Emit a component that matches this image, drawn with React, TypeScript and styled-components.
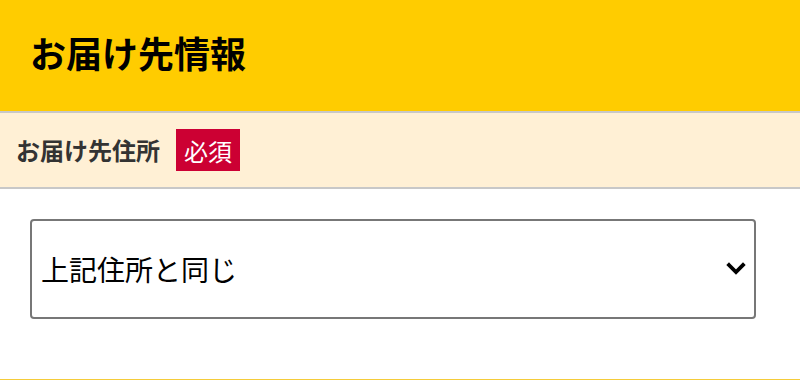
import React from "react";
import styled, { createGlobalStyle } from "styled-components";

const GlobalStyle = createGlobalStyle`
  html, body {
    margin: 0;
    padding: 0;
    background: #fff;
  }
  body {
    font-family: "Noto Sans CJK JP", "Noto Sans", sans-serif;
  }
`;

const Page = styled.div`
  width: 800px;
  height: 380px;
  overflow: hidden;
  background: #fff;
`;

const Header = styled.header`
  display: flex;
  align-items: center;
  height: 113px;
  padding-left: 30px;
  box-sizing: border-box;
  background: #ffcc00;
  border-bottom: 2px solid #c8c8c8;
`;

const Title = styled.h1`
  margin: 0;
  margin-top: -8px;
  font-size: 36px;
  font-weight: 700;
  color: #000;
  line-height: 1;
`;

const LabelRow = styled.div`
  display: flex;
  align-items: center;
  gap: 16px;
  height: 76px;
  padding-left: 16px;
  box-sizing: border-box;
  background: #fff0d5;
  border-bottom: 2px solid #c8c8c8;
`;

const Label = styled.span`
  font-size: 24px;
  font-weight: 700;
  color: #333;
  line-height: 1;
`;

const Badge = styled.span`
  display: inline-flex;
  align-items: center;
  justify-content: center;
  width: 64px;
  height: 42px;
  background: #cc0033;
  color: #fff;
  font-size: 24px;
  font-weight: 400;
`;

const Body = styled.div`
  height: 191px;
  padding: 30px 44px 0 30px;
  box-sizing: border-box;
  border-bottom: 1px solid #f5cc3a;
`;

const SelectWrap = styled.div`
  position: relative;
  width: 100%;
`;

const Select = styled.select`
  display: block;
  width: 100%;
  height: 100px;
  margin: 0;
  padding: 0 50px 0 9px;
  border: 2px solid #777;
  border-radius: 4px;
  background: #fff;
  color: #000;
  font-family: "Noto Sans CJK JP", "Noto Sans", sans-serif;
  font-size: 28px;
  appearance: none;
  outline: none;
`;

const Chevron = styled.svg`
  position: absolute;
  right: 10px;
  top: 50%;
  width: 20px;
  height: 14px;
  transform: translateY(-50%);
  pointer-events: none;
`;

export default function App() {
  return (
    <Page>
      <GlobalStyle />
      <Header>
        <Title>お届け先情報</Title>
      </Header>
      <LabelRow>
        <Label>お届け先住所</Label>
        <Badge>必須</Badge>
      </LabelRow>
      <Body>
        <SelectWrap>
          <Select defaultValue="same">
            <option value="same">上記住所と同じ</option>
            <option value="other">別の住所を指定する</option>
          </Select>
          <Chevron viewBox="0 0 20 14">
            <path
              d="M3 3 L10 10 L17 3"
              fill="none"
              stroke="#000"
              strokeWidth="3.8"
              strokeLinecap="square"
            />
          </Chevron>
        </SelectWrap>
      </Body>
    </Page>
  );
}
